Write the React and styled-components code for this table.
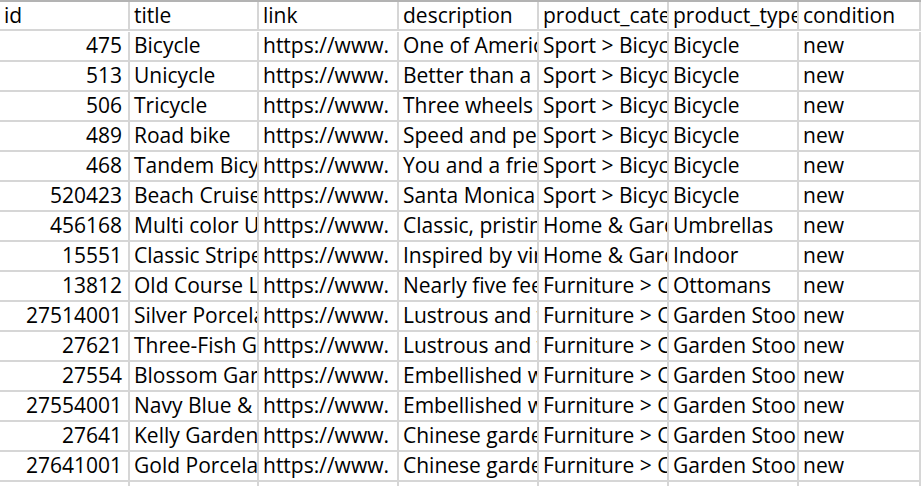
import React from "react";
import styled, { createGlobalStyle } from "styled-components";

const Global = createGlobalStyle`
  html, body { margin: 0; padding: 0; background: #fff; overflow: hidden; }
  body { font-family: "Open Sans", "Liberation Sans", sans-serif; }
`;

const Sheet = styled.div`
  display: grid;
  grid-template-columns: 130px 129px 140px 140px 130px 130px 1fr;
  grid-auto-rows: 30px;
  border-top: 2px solid #b3b3b3;
  width: 921px;
  height: 484px;
  overflow: hidden;
  color: #000;
  font-size: 21px;
`;

const Cell = styled.div`
  box-sizing: border-box;
  height: ${(p) => (p.$header ? 29 : 30)}px;
  border-right: 2px solid #d6d6d6;
  border-bottom: 2px solid #d6d6d6;
  display: flex;
  align-items: center;
  justify-content: ${(p) => (p.$num ? "flex-end" : "flex-start")};
  padding: ${(p) => (p.$num ? "0 6px 1px 4px" : "0 4px 1px 4px")};
  white-space: nowrap;
  overflow: hidden;
  line-height: 1;
`;

const headers = ["id", "title", "link", "description", "product_category", "product_type", "condition"];

const rows = [
  ["475", "Bicycle", "One of America's favorite", "Sport > Bicycles", "Bicycle"],
  ["513", "Unicycle", "Better than a bike", "Sport > Bicycles", "Bicycle"],
  ["506", "Tricycle", "Three wheels", "Sport > Bicycles", "Bicycle"],
  ["489", "Road bike", "Speed and performance", "Sport > Bicycles", "Bicycle"],
  ["468", "Tandem Bicycle", "You and a friend", "Sport > Bicycles", "Bicycle"],
  ["520423", "Beach Cruiser", "Santa Monica style", "Sport > Bicycles", "Bicycle"],
  ["456168", "Multi color Umbrella", "Classic, pristine", "Home & Garden", "Umbrellas"],
  ["15551", "Classic Striped", "Inspired by vintage", "Home & Garden", "Indoor"],
  ["13812", "Old Course Leather", "Nearly five feet", "Furniture > Chairs", "Ottomans"],
  ["27514001", "Silver Porcelain", "Lustrous and vibrant", "Furniture > Chairs", "Garden Stool"],
  ["27621", "Three-Fish Garden", "Lustrous and vibrant", "Furniture > Chairs", "Garden Stool"],
  ["27554", "Blossom Garden", "Embellished with", "Furniture > Chairs", "Garden Stool"],
  ["27554001", "Navy Blue & White", "Embellished with", "Furniture > Chairs", "Garden Stool"],
  ["27641", "Kelly Garden Stool", "Chinese garden", "Furniture > Chairs", "Garden Stool"],
  ["27641001", "Gold Porcelain", "Chinese garden", "Furniture > Chairs", "Garden Stool"],
];

export default function App() {
  return (
    <>
      <Global />
      <Sheet>
        {headers.map((h) => (
          <Cell key={h} $header>{h}</Cell>
        ))}
        {rows.map((r) => (
          <React.Fragment key={r[0]}>
            <Cell $num>{r[0]}</Cell>
            <Cell>{r[1]}</Cell>
            <Cell>https://www.</Cell>
            <Cell>{r[2]}</Cell>
            <Cell>{r[3]}</Cell>
            <Cell>{r[4]}</Cell>
            <Cell>new</Cell>
          </React.Fragment>
        ))}
        {headers.map((h) => (
          <Cell key={"e" + h} />
        ))}
      </Sheet>
    </>
  );
}
